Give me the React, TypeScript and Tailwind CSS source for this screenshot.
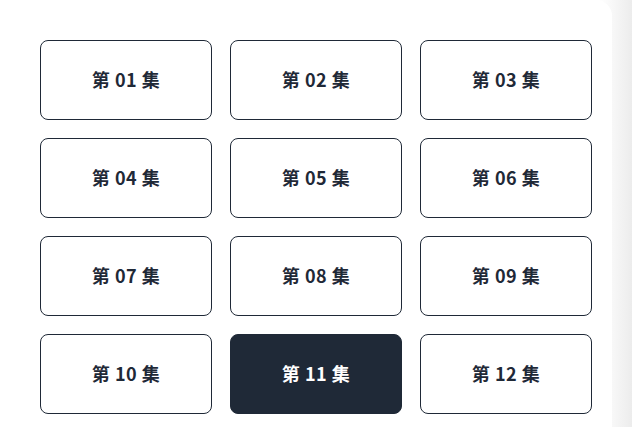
import React from "react";

const eps = Array.from({ length: 12 }, (_, i) => String(i + 1).padStart(2, "0"));

export default function App() {
  return (
    <div className="w-[632px] h-[427px] overflow-hidden bg-[linear-gradient(to_right,#ffffff_600px,#f8f8f8_612px,#ececec)]" style={{ fontFamily: '"Noto Sans CJK SC", "Noto Sans", sans-serif' }}>
      <div className="w-[612px] h-[480px] bg-white rounded-tr-2xl pt-10 pl-10 pr-5">
        <div className="grid grid-cols-[172px_172px_172px] gap-[18px]">
          {eps.map((e) => {
            const active = e === "11";
            return (
              <button
                key={e}
                className={
                  active
                    ? "h-20 pb-[2px] rounded-lg border border-[#1f2937] bg-[#1f2937] text-white text-lg font-bold tracking-[0.5px] flex items-center justify-center"
                    : "h-20 pb-[2px] rounded-lg border border-[#1f2937] bg-white text-[#1f2937] text-lg font-bold tracking-[0.5px] flex items-center justify-center"
                }
              >
                第 {e} 集
              </button>
            );
          })}
        </div>
      </div>
    </div>
  );
}
